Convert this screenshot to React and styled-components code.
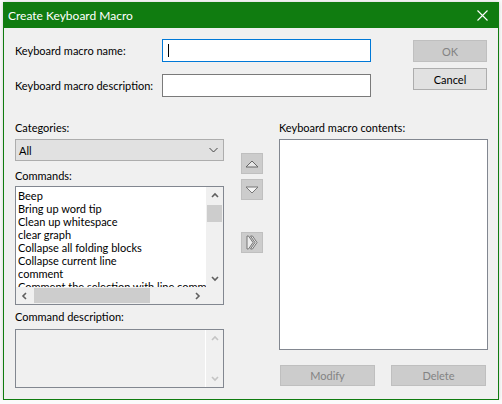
import React from "react";
import styled, { createGlobalStyle } from "styled-components";

const FONT = `"Segoe UI", Lato, "Noto Sans", sans-serif`;

const Global = createGlobalStyle`
  html, body { margin: 0; padding: 0; }
  body {
    background: #fbfbfb;
    font-family: ${FONT};
    font-size: 11px;
    color: #000;
    padding: 2px 0 0 3px;
  }
  * { box-sizing: border-box; }
`;

const Window = styled.div`
  width: 496px;
  height: 398px;
  border: 1px solid #107c10;
  background: #f0f0f0;
  display: flex;
  flex-direction: column;
  box-shadow: 0 0 4px rgba(0, 0, 0, 0.18);
`;

const TitleBar = styled.div`
  height: 25px;
  background: #107c10;
  color: #fff;
  display: flex;
  align-items: center;
  padding: 0 10px 0 4px;
  font-size: 12px;
`;

const TitleText = styled.div`
  flex: 1;
`;

const Content = styled.div`
  flex: 1;
  padding: 11px 0 0 11px;
  display: flex;
  flex-direction: column;
`;

const TopSection = styled.div`
  display: flex;
`;

const Fields = styled.div`
  display: flex;
  flex-direction: column;
  gap: 12px;
`;

const FieldRow = styled.div`
  display: flex;
  align-items: center;
`;

const FieldLabel = styled.div`
  width: 147px;
`;

const TextBox = styled.div`
  width: 209px;
  height: 23px;
  background: #fff;
  border: 1px solid ${(p) => (p.$focused ? "#0078d7" : "#7a7a7a")};
  display: flex;
  align-items: center;
  padding-left: 5px;
`;

const Caret = styled.span`
  width: 1px;
  height: 13px;
  background: #000;
`;

const SideButtons = styled.div`
  display: flex;
  flex-direction: column;
  gap: 6px;
  margin: 1px 0 0 42px;
`;

const Button = styled.div`
  width: ${(p) => p.$w}px;
  height: ${(p) => p.$h}px;
  background: ${(p) => (p.$disabled ? "#cccccc" : "#e1e1e1")};
  border: 1px solid ${(p) => (p.$disabled ? "#bfbfbf" : "#adadad")};
  color: ${(p) => (p.$disabled ? "#838383" : "#000")};
  display: flex;
  align-items: center;
  justify-content: center;
`;

const BottomSection = styled.div`
  display: flex;
  margin-top: 23px;
`;

const Column = styled.div`
  width: 209px;
  display: flex;
  flex-direction: column;
`;

const Label = styled.div`
  line-height: 16px;
  height: 16px;
  margin-top: ${(p) => p.$mt || 0}px;
`;

const Combo = styled.div`
  margin-top: 3px;
  height: 22px;
  background: #e1e1e1;
  border: 1px solid #adadad;
  display: flex;
  align-items: center;
  justify-content: space-between;
  padding: 0 5px 0 3px;
`;

const ListBox = styled.div`
  margin-top: 2px;
  height: 119px;
  border: 1px solid #828790;
  background: #fff;
  display: grid;
  grid-template-columns: 1fr 17px;
  grid-template-rows: 1fr 17px;
`;

const Items = styled.div`
  overflow: hidden;
  padding: 2px 0 0 2px;
  white-space: nowrap;
`;

const Item = styled.div`
  line-height: 13px;
  height: 13px;
`;

const VScroll = styled.div`
  background: #f0f0f0;
  display: flex;
  flex-direction: column;
  border-left: ${(p) => (p.$sep ? "1px solid #fff" : "none")};
`;

const HScroll = styled.div`
  background: #f0f0f0;
  display: flex;
`;

const Corner = styled.div`
  background: #f0f0f0;
`;

const ArrowCell = styled.div`
  width: 17px;
  height: 17px;
  flex: none;
  display: flex;
  align-items: center;
  justify-content: center;
`;

const VThumb = styled.div`
  margin: 1px 0 0 1px;
  width: 15px;
  height: 17px;
  background: #cdcdcd;
`;

const HThumb = styled.div`
  margin: 1px 0 0 1px;
  width: 116px;
  height: 15px;
  background: #cdcdcd;
`;

const Spacer = styled.div`
  flex: 1;
`;

const DescBox = styled.div`
  margin-top: 4px;
  height: 59px;
  border: 1px solid #828790;
  background: #f0f0f0;
  display: flex;
  justify-content: flex-end;
`;

const MiddleColumn = styled.div`
  width: 22px;
  margin: 0 16px 0 17px;
  display: flex;
  flex-direction: column;
`;

const IconButton = styled.div`
  width: 22px;
  height: 21px;
  margin-top: ${(p) => p.$mt}px;
  background: #cccccc;
  border: 1px solid #bfbfbf;
  display: flex;
  align-items: center;
  justify-content: center;
`;

const ContentsBox = styled.div`
  margin-top: 3px;
  height: 211px;
  background: #fff;
  border: 1px solid #828790;
`;

const BottomButtons = styled.div`
  margin: 15px 2px 0 1px;
  display: flex;
  justify-content: space-between;
`;

const Chevron = ({ dir, color = "#606060" }) => {
  const pts = {
    up: "1,5 4,2 7,5",
    down: "1,2 4,5 7,2",
    left: "5,1 2,4 5,7",
    right: "2,1 5,4 2,7",
  }[dir];
  return (
    <svg width="8" height="8" viewBox="0 0 8 8">
      <polyline points={pts} fill="none" stroke={color} strokeWidth="1.6" />
    </svg>
  );
};

const CloseIcon = () => (
  <svg width="11" height="11" viewBox="0 0 11 11">
    <path d="M0.5 0.5 L10.5 10.5 M10.5 0.5 L0.5 10.5" stroke="#fff" strokeWidth="1.1" />
  </svg>
);

const ComboChevron = () => (
  <svg width="9" height="6" viewBox="0 0 9 6">
    <polyline points="0.5,1 4.5,5 8.5,1" fill="none" stroke="#444" strokeWidth="1" />
  </svg>
);

const UpTriangle = () => (
  <svg width="14" height="8" viewBox="0 0 14 8">
    <polygon points="1,7 7,1 13,7" fill="#e6e6e6" stroke="#666" strokeWidth="1" />
  </svg>
);

const DownTriangle = () => (
  <svg width="14" height="8" viewBox="0 0 14 8">
    <polygon points="1,1 7,7 13,1" fill="#f4f4f4" stroke="#777" strokeWidth="1" />
  </svg>
);

const DoubleArrow = () => (
  <svg width="12" height="15" viewBox="0 0 12 15">
    <polygon points="1,1 2.5,1 7,7.5 2.5,14 1,14" fill="#ececec" stroke="#777" strokeWidth="1" />
    <polygon points="4.5,1 6.5,1 11,7.5 6.5,14 4.5,14 9,7.5" fill="#ececec" stroke="#777" strokeWidth="1" />
  </svg>
);

const commands = [
  "Beep",
  "Bring up word tip",
  "Clean up whitespace",
  "clear graph",
  "Collapse all folding blocks",
  "Collapse current line",
  "comment",
  "Comment the selection with line comments",
];

export default function App() {
  return (
    <>
      <Global />
      <Window>
        <TitleBar>
          <TitleText>Create Keyboard Macro</TitleText>
          <CloseIcon />
        </TitleBar>
        <Content>
          <TopSection>
            <Fields>
              <FieldRow>
                <FieldLabel>Keyboard macro name:</FieldLabel>
                <TextBox $focused>
                  <Caret />
                </TextBox>
              </FieldRow>
              <FieldRow>
                <FieldLabel>Keyboard macro description:</FieldLabel>
                <TextBox />
              </FieldRow>
            </Fields>
            <SideButtons>
              <Button $w={74} $h={22} $disabled>OK</Button>
              <Button $w={74} $h={22}>Cancel</Button>
            </SideButtons>
          </TopSection>
          <BottomSection>
            <Column>
              <Label>Categories:</Label>
              <Combo>
                <span>All</span>
                <ComboChevron />
              </Combo>
              <Label $mt={7}>Commands:</Label>
              <ListBox>
                <Items>
                  {commands.map((c) => (
                    <Item key={c}>{c}</Item>
                  ))}
                </Items>
                <VScroll>
                  <ArrowCell><Chevron dir="up" /></ArrowCell>
                  <VThumb />
                  <Spacer />
                  <ArrowCell><Chevron dir="down" /></ArrowCell>
                </VScroll>
                <HScroll>
                  <ArrowCell><Chevron dir="left" /></ArrowCell>
                  <HThumb />
                  <Spacer />
                  <ArrowCell><Chevron dir="right" /></ArrowCell>
                </HScroll>
                <Corner />
              </ListBox>
              <Label $mt={4}>Command description:</Label>
              <DescBox>
                <VScroll $sep>
                  <ArrowCell><Chevron dir="up" color="#c4c4c4" /></ArrowCell>
                  <Spacer />
                  <ArrowCell><Chevron dir="down" color="#c4c4c4" /></ArrowCell>
                </VScroll>
              </DescBox>
            </Column>
            <MiddleColumn>
              <IconButton $mt={33}><UpTriangle /></IconButton>
              <IconButton $mt={5}><DownTriangle /></IconButton>
              <IconButton $mt={32}><DoubleArrow /></IconButton>
            </MiddleColumn>
            <Column>
              <Label>Keyboard macro contents:</Label>
              <ContentsBox />
              <BottomButtons>
                <Button $w={95} $h={21} $disabled>Modify</Button>
                <Button $w={95} $h={21} $disabled>Delete</Button>
              </BottomButtons>
            </Column>
          </BottomSection>
        </Content>
      </Window>
    </>
  );
}
